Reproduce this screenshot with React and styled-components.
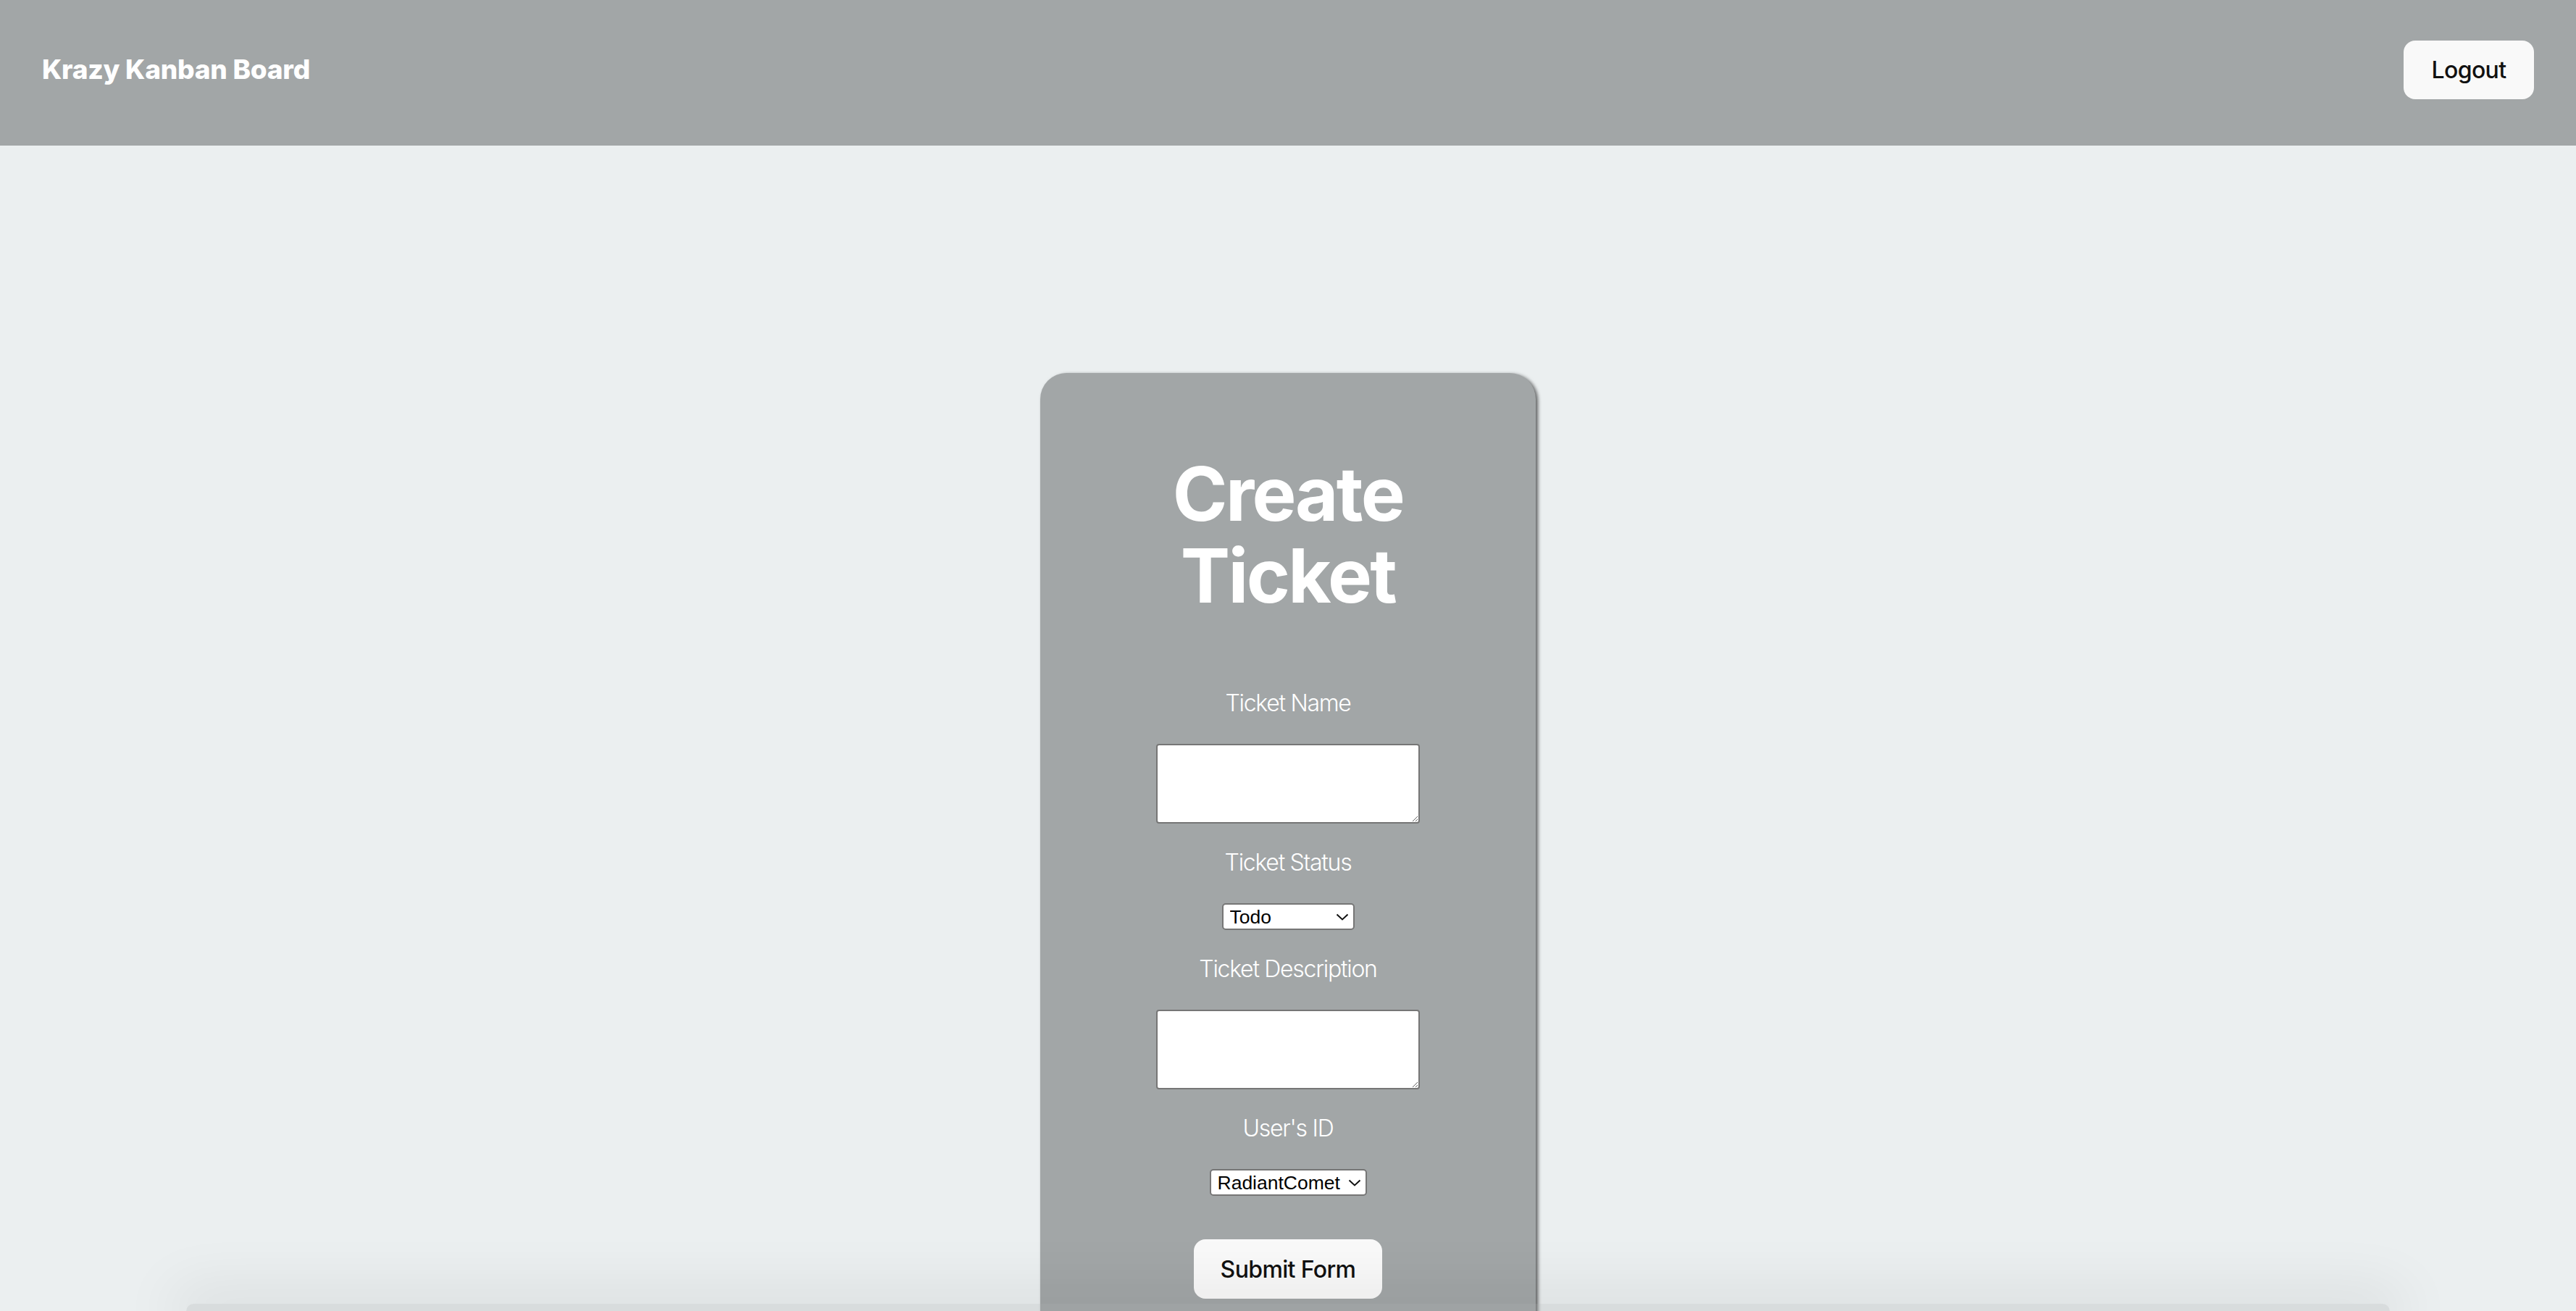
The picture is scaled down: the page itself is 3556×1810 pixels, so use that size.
import React from "react";
import styled, { createGlobalStyle } from "styled-components";

const GlobalStyle = createGlobalStyle`
  html, body {
    margin: 0;
    padding: 0;
    background: #ebeff0;
    font-family: Inter, "Noto Sans", "Liberation Sans", sans-serif;
    line-height: 1.5;
    font-weight: 400;
    color: #ffffff;
    -webkit-font-smoothing: antialiased;
  }
  * { box-sizing: border-box; }
`;

const Page = styled.div`
  min-height: 100vh;
  display: flex;
  flex-direction: column;
`;

const Header = styled.header`
  height: 201px;
  background: #a2a6a7;
  display: flex;
  align-items: center;
  justify-content: space-between;
  padding: 0 58px 8px 58px;
`;

const Brand = styled.h2`
  margin: 0;
  font-size: 37px;
  font-weight: 800;
  letter-spacing: -0.006em;
  color: #ffffff;
  line-height: 1.21;
`;

const Button = styled.button`
  width: ${(p) => p.$w}px;
  height: ${(p) => p.$h}px;
  border: 2px solid transparent;
  border-radius: 16px;
  background: #f9f9f9;
  color: #111111;
  font-family: Inter, "Noto Sans", sans-serif;
  font-size: 32px;
  font-weight: 500;
  letter-spacing: -0.02em;
  cursor: pointer;
  padding: 0;
`;

const Main = styled.main`
  display: flex;
  flex-direction: column;
  align-items: center;
  padding-top: 314px;
`;

const Card = styled.form`
  width: 684px;
  background: #a2a6a7;
  border-radius: 36px;
  box-shadow: 3px 2px 5px rgba(0, 0, 0, 0.6);
  padding: 111px 0 70px;
  display: flex;
  flex-direction: column;
  align-items: center;
`;

const Title = styled.h1`
  margin: 0 0 96px;
  font-size: 102.4px;
  line-height: 1.1;
  font-weight: 700;
  letter-spacing: -0.025em;
  text-align: center;
  color: #ffffff;
`;

const Label = styled.label`
  display: block;
  font-size: 32px;
  line-height: 48px;
  font-weight: 350;
  letter-spacing: -0.04em;
  color: #ffffff;
  margin-bottom: 32px;
  text-align: center;
`;

const TextArea = styled.textarea`
  width: 364px;
  height: 110px;
  margin: 0 0 30px;
  border: 2px solid #767676;
  border-radius: 4px;
  background: #ffffff;
  font-family: "Liberation Mono", monospace;
  font-size: 26px;
`;

const SelectWrap = styled.div`
  position: relative;
  margin: 0 0 30px;
  display: inline-flex;
`;

const Select = styled.select`
  appearance: none;
  -webkit-appearance: none;
  height: 37px;
  border: 2px solid #767676;
  border-radius: 5px;
  background: #ffffff;
  color: #000000;
  font-family: "Liberation Sans", Arial, sans-serif;
  font-size: 26.5px;
  line-height: 1;
  padding: 0 34px 0 9px;
  margin: 0;
`;

const Chevron = styled.svg`
  position: absolute;
  right: 8px;
  top: 50%;
  width: 18px;
  height: 10px;
  margin-top: -5px;
  pointer-events: none;
`;

const SubmitButton = styled(Button)`
  margin-top: 30px;
`;

const BottomShade = styled.div`
  position: fixed;
  left: 257px;
  right: 257px;
  bottom: 0;
  height: 10px;
  border-radius: 40px 40px 0 0;
  background: rgba(150, 155, 157, 0.22);
  box-shadow: 0 0 80px 20px rgba(0, 0, 0, 0.085);
  pointer-events: none;
  z-index: 10;
`;

function Dropdown({ id, defaultValue, children }) {
  return (
    <SelectWrap>
      <Select id={id} defaultValue={defaultValue}>
        {children}
      </Select>
      <Chevron viewBox="0 0 18 10" fill="none">
        <path d="M1.5 1.5 L9 8.5 L16.5 1.5" stroke="#111" strokeWidth="2" />
      </Chevron>
    </SelectWrap>
  );
}

export default function App() {
  return (
    <>
      <GlobalStyle />
      <Page>
        <Header>
          <Brand>Krazy Kanban Board</Brand>
          <Button type="button" $w={180} $h={81}>
            Logout
          </Button>
        </Header>
        <Main>
          <Card onSubmit={(e) => e.preventDefault()}>
            <Title>
              Create
              <br />
              Ticket
            </Title>
            <Label htmlFor="tName">Ticket Name</Label>
            <TextArea id="tName" />
            <Label htmlFor="tStatus">Ticket Status</Label>
            <Dropdown id="tStatus" defaultValue="Todo">
              <option value="Todo">Todo</option>
              <option value="In Progress">In Progress</option>
              <option value="Done">Done</option>
            </Dropdown>
            <Label htmlFor="tDesc">Ticket Description</Label>
            <TextArea id="tDesc" />
            <Label htmlFor="tUser">User's ID</Label>
            <Dropdown id="tUser" defaultValue="1">
              <option value="1">RadiantComet</option>
            </Dropdown>
            <SubmitButton type="submit" $w={260} $h={82}>
              Submit Form
            </SubmitButton>
          </Card>
        </Main>
        <BottomShade />
      </Page>
    </>
  );
}
